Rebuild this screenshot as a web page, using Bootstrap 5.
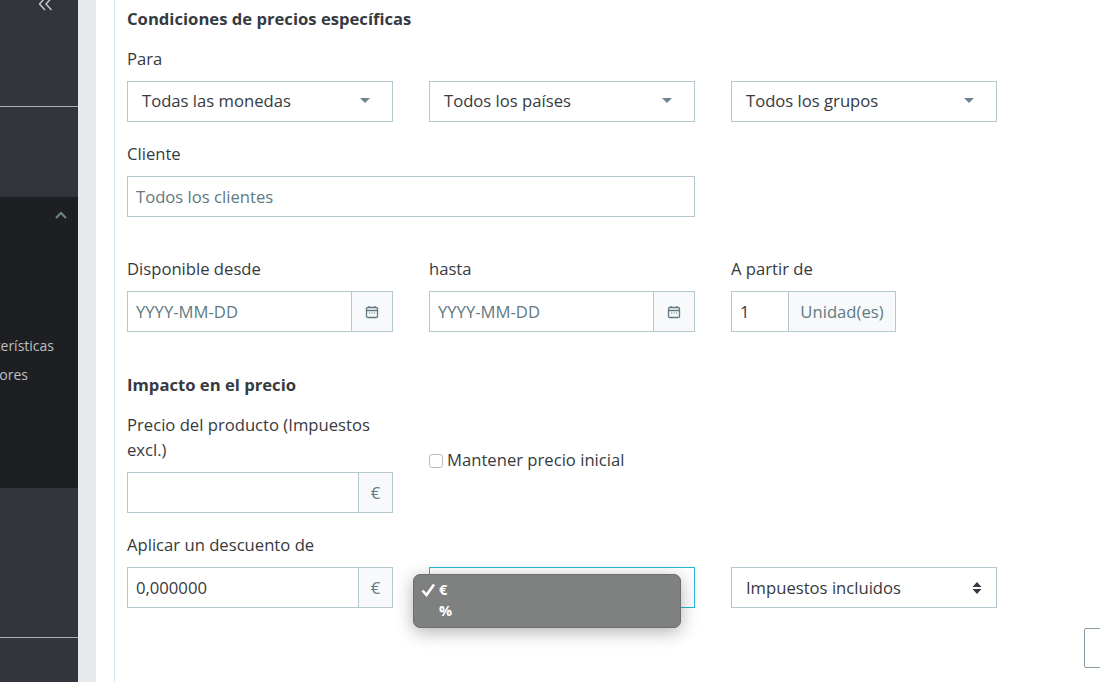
<!DOCTYPE html>
<html lang="es">
<head>
<meta charset="utf-8">
<title>Condiciones de precios</title>
<link href="https://cdn.jsdelivr.net/npm/bootstrap@5.3.0/dist/css/bootstrap.min.css" rel="stylesheet">
<style>
html,body{height:682px;overflow:hidden;margin:0;background:#fff}
body{font-family:"Open Sans","Noto Sans",sans-serif;font-size:16.65px;line-height:25px;color:#363a41}
.shell{height:682px}
.side{width:78px;flex:none;background:#32353c;overflow:hidden}
.side-a{height:106px;position:relative}
.side-line{height:1px;background:#a3b2b8}
.side-b{height:90px}
.side-dark{height:291px;background:#1e1f23;position:relative}
.side-c{height:149px}
.side-d{flex:1}
.collapse-ico{position:absolute;left:38px;top:-3px}
.up-ico{position:absolute;left:55px;top:14px}
.menu-list{padding-top:137px;font-size:14px;color:#bebfc1}
.menu-item{height:29px;line-height:24px;display:flex;justify-content:flex-end;white-space:nowrap}
.pad-a{padding-right:24px}
.pad-b{padding-right:50px}
.strip{width:18px;flex:none;background:#e7e9ea}
.gutter-w{width:18px;flex:none}
.main-pane{flex:1;border-left:1px solid #d3e6ee;padding-left:12px;position:relative;min-width:0}
.sec-title{font-weight:700;margin:0;height:25px}
.s1{padding-top:6px;height:31px}
.gap-top{height:15px}
.grid3{--bs-gutter-x:36px;--bs-gutter-y:0;width:906px;margin-left:-18px;margin-right:0}
.f-label{height:25px;margin:0}
.f-box{height:41px;border:1px solid #b5c8cd;background:#fff;color:#363a41}
.sel-drop{display:flex;align-items:center;justify-content:space-between;padding:0 22px 2px 14px}
.sel-end{padding:0 14px}
.caret-ico{width:0;height:0;border-left:5px solid transparent;border-right:5px solid transparent;border-top:5px solid #6c868e}
.txt-in{padding:0 8px;display:flex;align-items:center}
.ph{color:#5f7a82}
.addon{flex:none;height:41px;background:#f7f9fa;border:1px solid #b5c8cd;border-left:0;display:flex;align-items:center;justify-content:center;color:#5f7a82}
.addon-cal{width:41px}
.addon-eur{width:34px}
.addon-unit{width:107px}
.qty{width:58px;flex:none}
.focus-box{border-color:#25b9d7}
.check-line{height:41px;display:flex;align-items:center;margin-top:-6px}
.fake-check{width:14px;height:14px;border:1px solid #b9bcbf;border-radius:3px;margin-right:4px;background:#fff;flex:none;position:relative;top:1px}
.pop-menu{position:absolute;left:298px;top:574px;width:268px;height:54px;background:#7f8080;border:1px solid #6b6d6f;border-radius:7px;box-shadow:0 4px 18px rgba(0,0,0,.3);color:#fff;font-size:14.5px;font-weight:700;line-height:21px;padding:4px 0 0 25px}
.pop-row{position:relative;height:21px}
.tick{position:absolute;left:-18px;top:4px}
.corner-btn{position:absolute;left:969px;top:628px;width:60px;height:40px;border:1px solid #8a9ca3;border-radius:2px;background:#fff}
.m-10{margin-top:10px}.m-19{margin-top:19px}.m-39{margin-top:39px}.m-40{margin-top:40px}.m-15{margin-top:15px}
.two-line{height:50px;margin:0}
.updown{display:block}
</style>
</head>
<body>
<div class="shell d-flex">
  <aside class="side d-flex flex-column">
    <div class="side-a">
      <svg class="collapse-ico" width="15" height="14" viewBox="0 0 15 14" fill="none" stroke="#c8cdd0" stroke-width="1.4"><path d="M7 1 1.500 7 7 13M13.500 1 8 7l5.500 6"/></svg>
    </div>
    <div class="side-line"></div>
    <div class="side-b"></div>
    <div class="side-dark">
      <svg class="up-ico" width="12" height="8" viewBox="0 0 12 8" fill="none" stroke="#6c868e" stroke-width="2"><path d="M1 7 6 2l5 5"/></svg>
      <div class="menu-list">
        <div class="menu-item pad-a">Atributos y Características</div>
        <div class="menu-item pad-b">Marcas y Proveedores</div>
      </div>
    </div>
    <div class="side-c"></div>
    <div class="side-line"></div>
    <div class="side-d"></div>
  </aside>
  <div class="strip"></div>
  <div class="gutter-w"></div>
  <main class="main-pane">
    <p class="sec-title s1">Condiciones de precios específicas</p>
    <div class="gap-top"></div>
    <p class="f-label">Para</p>
    <div class="row grid3 m-10">
      <div class="col-4"><div class="f-box sel-drop"><span>Todas las monedas</span><span class="caret-ico"></span></div></div>
      <div class="col-4"><div class="f-box sel-drop"><span>Todos los países</span><span class="caret-ico"></span></div></div>
      <div class="col-4"><div class="f-box sel-drop"><span>Todos los grupos</span><span class="caret-ico"></span></div></div>
    </div>
    <p class="f-label m-19">Cliente</p>
    <div class="row grid3 m-10">
      <div class="col-8"><div class="f-box txt-in"><span class="ph">Todos los clientes</span></div></div>
    </div>
    <div class="row grid3 m-39">
      <div class="col-4">
        <p class="f-label">Disponible desde</p>
        <div class="d-flex m-10"><div class="f-box txt-in flex-grow-1"><span class="ph">YYYY-MM-DD</span></div>
          <div class="addon addon-cal"><svg width="14" height="14" viewBox="0 0 14 14" fill="none" stroke="#5f7a82" stroke-width="1.300"><rect x="1.500" y="2.500" width="11" height="10" rx="1.200"/><path d="M1.500 5.500h11M4 1v2M10 1v2"/><path d="M4 8h1.200M6.500 8h1.200M9 8h1.200" stroke-width="1"/></svg></div></div>
      </div>
      <div class="col-4">
        <p class="f-label">hasta</p>
        <div class="d-flex m-10"><div class="f-box txt-in flex-grow-1"><span class="ph">YYYY-MM-DD</span></div>
          <div class="addon addon-cal"><svg width="14" height="14" viewBox="0 0 14 14" fill="none" stroke="#5f7a82" stroke-width="1.300"><rect x="1.500" y="2.500" width="11" height="10" rx="1.200"/><path d="M1.500 5.500h11M4 1v2M10 1v2"/><path d="M4 8h1.200M6.500 8h1.200M9 8h1.200" stroke-width="1"/></svg></div></div>
      </div>
      <div class="col-4">
        <p class="f-label">A partir de</p>
        <div class="d-flex m-10"><div class="f-box txt-in qty"><span>1</span></div><div class="addon addon-unit">Unidad(es)</div></div>
      </div>
    </div>
    <p class="sec-title m-40">Impacto en el precio</p>
    <div class="row grid3 m-15">
      <div class="col-4">
        <p class="two-line">Precio del producto (Impuestos excl.)</p>
        <div class="d-flex m-10"><div class="f-box txt-in flex-grow-1"></div><div class="addon addon-eur">€</div></div>
      </div>
      <div class="col-4 d-flex align-items-center">
        <div class="check-line"><span class="fake-check"></span><span>Mantener precio inicial</span></div>
      </div>
    </div>
    <div class="row grid3 m-19">
      <div class="col-12"><p class="f-label">Aplicar un descuento de</p></div>
    </div>
    <div class="row grid3 m-10">
      <div class="col-4"><div class="d-flex"><div class="f-box txt-in flex-grow-1"><span>0,000000</span></div><div class="addon addon-eur">€</div></div></div>
      <div class="col-4"><div class="f-box focus-box"></div></div>
      <div class="col-4"><div class="f-box sel-drop sel-end"><span>Impuestos incluidos</span>
        <svg class="updown" width="10" height="14" viewBox="0 0 10 14" fill="#363a41"><path d="M5 1 9.500 6H.5zM5 13 .5 8h9z"/></svg></div></div>
    </div>
    <div class="pop-menu">
      <div class="pop-row"><svg class="tick" width="15" height="14" viewBox="0 0 15 14" fill="none" stroke="#fff" stroke-width="2.600"><path d="M1.500 7.500 5.500 12 13 1.500"/></svg>€</div>
      <div class="pop-row">%</div>
    </div>
    <div class="corner-btn"></div>
  </main>
</div>
<script src="https://cdn.jsdelivr.net/npm/bootstrap@5.3.0/dist/js/bootstrap.bundle.min.js"></script>
</body>
</html>
